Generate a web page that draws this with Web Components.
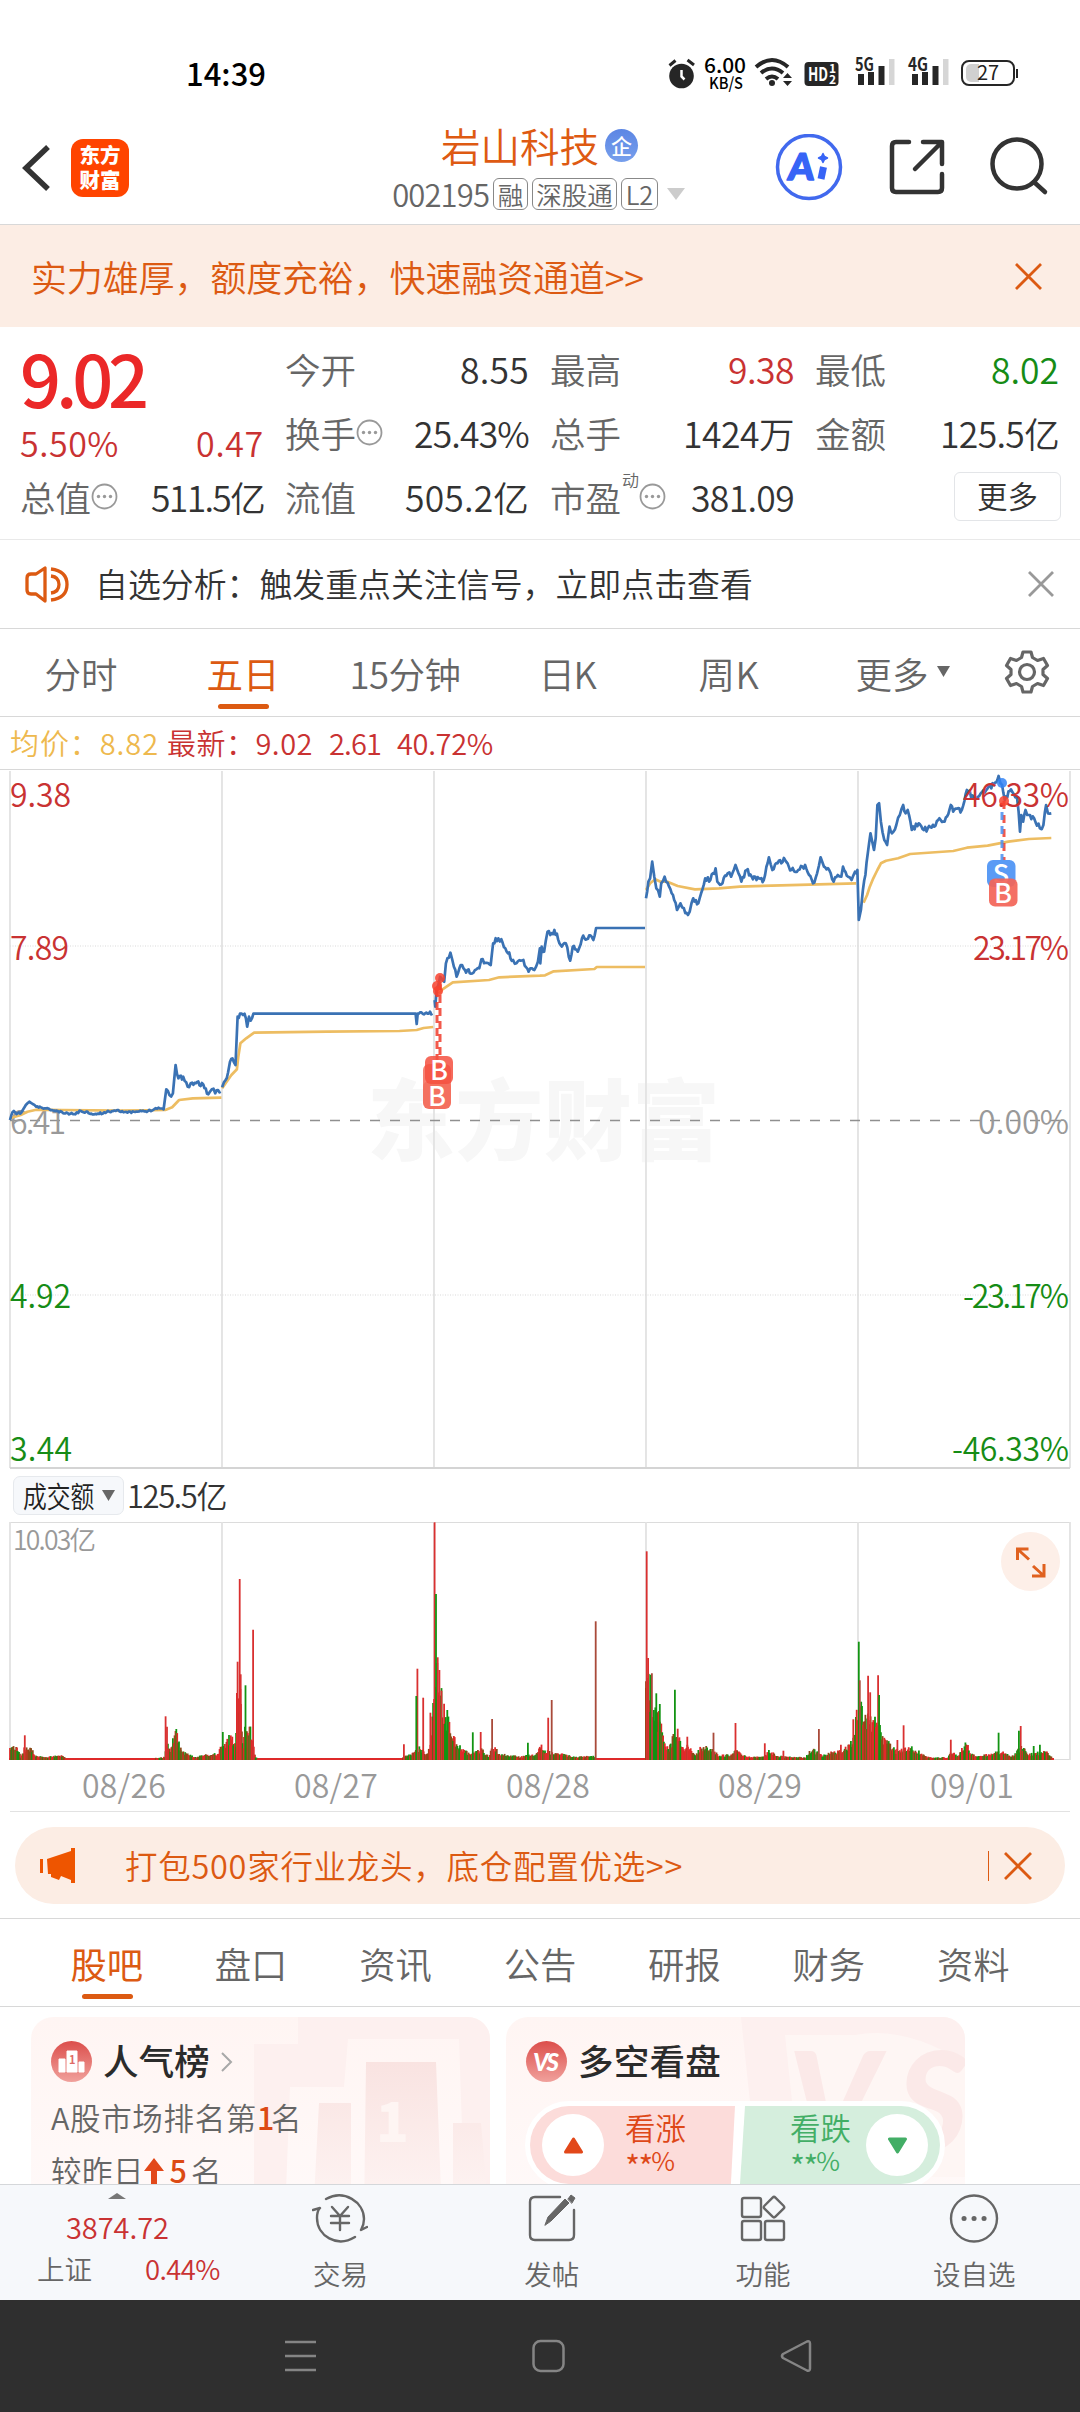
<!DOCTYPE html>
<html lang="zh-CN">
<head>
<meta charset="utf-8">
<title>岩山科技 002195</title>
<style>
    body{
        margin: 0;
        width: 1080px;
        height: 2412px;
        overflow: hidden;
        background: #fff;
        color: #333;
        font-family: "Noto Sans CJK SC", "Noto Sans", sans-serif;
        font-weight: 350;
        display: flex;
        flex-direction: column;
        --orange: #dc5a12;
        --red: #c93232;
        --green: #168c16;
        --grey: #666;
        --line: #d8d8d8;
    }
</style>
</head>
<body>
<status-bar></status-bar>
<stock-header>
    <span slot="name">岩山科技</span>
    <fit-text slot="code" w="97">002195</fit-text>
</stock-header>
<promo-banner><fit-text w="613">实力雄厚，额度充裕，快速融资通道&gt;&gt;</fit-text></promo-banner>
<quote-panel></quote-panel>
<notice-bar>自选分析：触发重点关注信号，立即点击查看</notice-bar>
<period-tabs></period-tabs>
<chart-legend></chart-legend>
<price-chart></price-chart>
<volume-head></volume-head>
<volume-chart></volume-chart>
<promo-pill><fit-text w="558">打包500家行业龙头，底仓配置优选&gt;&gt;</fit-text></promo-pill>
<section-tabs></section-tabs>
<card-row>
    <rank-card></rank-card>
    <vote-card></vote-card>
</card-row>
<bottom-bar></bottom-bar>
<system-nav></system-nav>

<script>
// small helper: every element keeps its markup in a template string
function define(name, html, setup){
    customElements.define(name, class extends HTMLElement{
        constructor(){
            super();
            this.attachShadow({mode: "open"});
            this.shadowRoot.innerHTML = html;
            if(setup){
                setup(this.shadowRoot, this);
            }
        }
    });
}

define("status-bar", `
<style>
    :host{
        display: flex;
        height: 105px;
        align-items: center;
        justify-content: space-between;
        box-sizing: border-box;
        padding: 40px 58px 0 186px;
    }
    .time{
        font-size: 31px;
        line-height: 40px;
        font-weight: 500;
        color: #000;
    }
    .icons{ display: block; }
</style>
<span class="time"><fit-text w="80">14:39</fit-text></span>
<svg class="icons" width="354" height="44" viewBox="668 51 354 44" fill="none" stroke="#262626" font-family="Noto Sans CJK SC">
    <circle cx="681.500" cy="76" r="12.300" fill="#262626" stroke="none"/>
    <path d="M669.500 65.500l6-5M687.500 60l6.500 5" stroke-width="3"/>
    <path d="M681.500 70v6.500l3 3" stroke="#fff" stroke-width="2.500"/>
    <g fill="#000" stroke="none" font-weight="500">
        <text x="704" y="73" font-size="20" textLength="42" lengthAdjust="spacingAndGlyphs">6.00</text>
        <text x="709" y="88.500" font-size="16" textLength="34" lengthAdjust="spacingAndGlyphs">KB/S</text>
    </g>
    <g stroke-width="4">
        <path d="M756 67q16-14 32 0M761 73q11-9 22 0M766 79q6-5 12 0"/>
    </g>
    <circle cx="772" cy="83" r="3" fill="#262626" stroke="none"/>
    <path d="M783 78l4.500-5 4.500 5zM783 81l4.500 5 4.500-5z" fill="#262626" stroke="none"/>
    <rect x="804.500" y="62" width="34" height="24" rx="4" fill="#262626" stroke="none"/>
    <g fill="#fff" stroke="none" font-weight="700">
        <text x="808" y="81" font-size="19" textLength="20" lengthAdjust="spacingAndGlyphs">HD</text>
        <text x="829" y="73" font-size="12">1</text>
        <text x="829" y="84" font-size="12">2</text>
    </g>
    <g fill="#262626" stroke="none">
        <text x="855" y="71" font-size="18" font-weight="700" textLength="19" lengthAdjust="spacingAndGlyphs">5G</text>
        <path d="M858 74h6v11h-6zM868 72h6v13h-6zM878.500 66h6v19h-6z"/>
        <path d="M889 59h5.500v26H889z" fill="#d6d6d6"/>
        <text x="908" y="71" font-size="18" font-weight="700" textLength="20" lengthAdjust="spacingAndGlyphs">4G</text>
        <path d="M912 74h6v11h-6zM922 72h6v13h-6zM932.500 66h6v19h-6z"/>
        <path d="M943 59h5.500v26H943z" fill="#d6d6d6"/>
    </g>
    <rect x="962" y="61" width="52" height="24" rx="7" stroke-width="2"/>
    <path d="M971 64h8v18h-8a5 5 0 0 1-5-5v-8a5 5 0 0 1 5-5z" fill="#d0d0d0" stroke="none"/>
    <path d="M1017 69v9" stroke-width="2"/>
    <text x="977" y="80" font-size="20" fill="#222" stroke="none" font-weight="400">27</text>
</svg>
`);

define("stock-header", `
<style>
    :host{
        display: grid;
        grid-template-columns: 376px 327px 1fr;
        height: 119px;
        border-bottom: 1px solid var(--line);
    }
    .left{ display: flex; align-items: center; padding: 6px 0 0 22px; gap: 20px; }
    .logo{
        width: 58px;
        height: 58px;
        border-radius: 12px;
        background: #ff4400;
        color: #fff;
        font-size: 20.500px;
        line-height: 25px;
        font-weight: 900;
        text-align: center;
        box-sizing: border-box;
        padding-top: 3px;
    }
    .mid{ display: flex; flex-direction: column; align-items: center; padding-top: 15px; }
    .name{
        display: flex;
        align-items: center;
        gap: 6px;
        font-size: 39.500px;
        line-height: 50px;
        color: #de5a12;
    }
    .ent{
        width: 33px;
        height: 33px;
        border-radius: 50%;
        background: linear-gradient(#5c86e4, #779fec);
        color: #fff;
        font-size: 21px;
        line-height: 32px;
        font-weight: 500;
        text-align: center;
    }
    .code{ display: flex; align-items: center; gap: 4px; font-size: 31px; line-height: 42px; color: var(--grey); margin: 3px 0 0 -2px; }
    .tag{
        border: 1px solid #888;
        border-radius: 6px;
        height: 30px;
        line-height: 29px;
        font-size: 25.500px;
        padding: 0 3.500px;
    }
    .code svg{ margin-left: 5px; }
    .icons{ display: block; margin: 29px 0 0 57px; }
</style>
<div class="left">
    <svg width="29" height="46" viewBox="22 144 29 46" fill="none" stroke="#333" stroke-width="5.500"><path d="M48 146L26 167l22 21"/></svg>
    <div class="logo">东方<br>财富</div>
</div>
<div class="mid">
    <div class="name"><slot name="name"></slot><span class="ent">企</span></div>
    <div class="code">
        <slot name="code"></slot>
        <span class="tag">融</span><span class="tag">深股通</span><span class="tag">L2</span>
        <svg width="18" height="12"><path d="M0 0h18l-9 12z" fill="#ccc"/></svg>
    </div>
</div>
<svg class="icons" width="300" height="70" viewBox="760 134 300 70" fill="none" stroke="#333" stroke-width="4.500" stroke-linecap="round" stroke-linejoin="round">
    <circle cx="809" cy="167" r="31.500" stroke="#4169ee" stroke-width="3.500"/>
    <text x="789" y="180" font-family="Lato" font-weight="900" font-size="37" fill="#3764f6" stroke="#3764f6" stroke-width="1.500" transform="skewX(-5) translate(14 0)">A</text>
    <path d="M823.500 167l-2.500 12" stroke="#3764f6" stroke-width="7" stroke-linecap="butt"/>
    <path d="M823 153.500l1.500 3 3 1.500-3 1.500-1.500 3-1.500-3-3-1.500 3-1.500z" fill="#3764f6" stroke="#3764f6" stroke-width="1.500"/>
    <path d="M909 142h-13q-4 0-4 4v42q0 4 4 4h42q4 0 4-4v-14M923 142h19v22M941 143l-26 26"/>
    <circle cx="1017" cy="164" r="24.500"/>
    <path d="M1034 182l11 10"/>
</svg>
`);

define("promo-banner", `
<style>
    :host{
        display: flex;
        height: 102px;
        align-items: center;
        justify-content: space-between;
        box-sizing: border-box;
        padding: 0 38px 0 31px;
        background: #fcede4;
        color: var(--orange);
        font-size: 36px;
    }
</style>
<slot></slot>
<svg width="27" height="27" stroke="#dc5a12" stroke-width="2.800"><path d="M1 1l25 25M26 1L1 26"/></svg>
`);

define("more-dot", `
<style>
    :host{ display: inline-flex; }
</style>
<svg width="27" height="27" viewBox="0 0 27 27" fill="#999">
    <circle cx="13.500" cy="13.500" r="12" fill="none" stroke="#999" stroke-width="1.800"/>
    <circle cx="7.500" cy="13.500" r="1.700"/><circle cx="13.500" cy="13.500" r="1.700"/><circle cx="19.500" cy="13.500" r="1.700"/>
</svg>
`);

define("quote-cell", `
<style>
    :host{
        display: flex;
        align-items: center;
        justify-content: space-between;
        font-size: 35.500px;
        height: 64px;
    }
    .label{ display: flex; align-items: center; color: var(--grey); gap: 0; margin-left: -1px; }
</style>
<span class="label"><slot name="label"></slot></span>
<slot></slot>
`);

define("quote-panel", `
<style>
    :host{
        display: grid;
        grid-template-columns: repeat(4, 243px);
        grid-template-rows: repeat(3, 64px);
        column-gap: 22px;
        padding: 9px 0 10px 21px;
        height: 193px;
        border-bottom: 1px solid #e9e9e9;
    }
    .last{ grid-row: span 2; display: flex; flex-direction: column; color: var(--red); font-size: 34px; margin-left: -1px; }
    .price{ font-size: 72px; line-height: 82px; font-weight: 500; color: #eb2828; }
    .change{ display: flex; justify-content: space-between; line-height: 40px; margin-top: 5px; }
    .up{ color: var(--red); }
    .down{ color: var(--green); }
    sup{ font-size: 17px; line-height: 20px; align-self: flex-start; margin: -1px 0 0 1px; }
    .btn{
        justify-self: end;
        align-self: center;
        width: 105px;
        height: 47px;
        border: 1px solid #e3e5e8;
        border-radius: 6px;
        font-size: 30.500px;
        line-height: 45px;
        text-align: center;
        margin: 0 -2px 0 0;
    }
</style>
<div class="last">
    <div class="price"><fit-text w="124">9.02</fit-text></div>
    <div class="change"><fit-text w="99">5.50%</fit-text><fit-text w="68">0.47</fit-text></div>
</div>
<quote-cell><span slot="label">今开</span><fit-text w="69">8.55</fit-text></quote-cell>
<quote-cell><span slot="label">最高</span><fit-text w="66" class="up">9.38</fit-text></quote-cell>
<quote-cell><span slot="label">最低</span><fit-text w="68" class="down">8.02</fit-text></quote-cell>
<quote-cell><span slot="label">换手</span><more-dot slot="label"></more-dot><fit-text w="115">25.43%</fit-text></quote-cell>
<quote-cell><span slot="label">总手</span><fit-text w="111">1424万</fit-text></quote-cell>
<quote-cell><span slot="label">金额</span><fit-text w="119">125.5亿</fit-text></quote-cell>
<quote-cell><span slot="label">总值</span><more-dot slot="label"></more-dot><fit-text w="113">511.5亿</fit-text></quote-cell>
<quote-cell><span slot="label">流值</span><fit-text w="124">505.2亿</fit-text></quote-cell>
<quote-cell><span slot="label">市盈</span><sup slot="label">动</sup><more-dot slot="label"></more-dot><fit-text w="103">381.09</fit-text></quote-cell>
<div class="btn">更多</div>
`);

define("notice-bar", `
<style>
    :host{
        display: flex;
        align-items: center;
        height: 88px;
        padding: 0 26px 0 25px;
        border-bottom: 1px solid var(--line);
        font-size: 32.900px;
    }
    .icon{ margin-right: 26px; }
    .text{ flex: 1; margin-top: -3px; }
</style>
<svg class="icon" width="44" height="38" viewBox="25 564 44 38" fill="none" stroke="#dc5a12" stroke-width="3.300" stroke-linejoin="round">
    <path d="M45 567v33l-9-7h-5q-4 0-4-4v-12q0-4 4-4h5z"/>
    <path d="M51 575q8 1 8 8.500T51 592M51 568q16 2 16 15.500T51 599"/>
</svg>
<span class="text"><slot></slot></span>
<svg width="26" height="26" stroke="#999" stroke-width="2.800"><path d="M1 1l24 24M25 1L1 25"/></svg>
`);

define("period-tabs", `
<style>
    :host{
        display: flex;
        height: 87px;
        border-bottom: 1px solid var(--line);
        font-size: 36.500px;
        color: var(--grey);
    }
    div{
        width: 162px;
        display: flex;
        align-items: center;
        justify-content: center;
        gap: 8px;
        padding-top: 1px;
        box-sizing: border-box;
    }
    .on{ color: var(--orange); font-weight: 400; position: relative; }
    .on::after{
        content: "";
        position: absolute;
        left: 56px;
        bottom: 7px;
        width: 51px;
        height: 5px;
        border-radius: 3px;
        background: var(--orange);
    }
    .more{ width: 185px; }
    .more svg{ margin-top: -3px; }
    .gear{ margin: 20px 0 0 9px; }
</style>
<div>分时</div>
<div class="on">五日</div>
<div><fit-text w="111">15分钟</fit-text></div>
<div><fit-text w="57">日K</fit-text></div>
<div><fit-text w="61">周K</fit-text></div>
<div class="more">更多<svg width="13" height="11"><path d="M0 0h13l-6.500 11z" fill="#666"/></svg></div>
<svg class="gear" width="46" height="46" viewBox="0 0 46 46" fill="none" stroke="#666" stroke-width="3.200" stroke-linejoin="round">
    <path d="M19 3h8l1.500 5.500 5 3 6-2 4 7-4.500 4v5l4.500 4-4 7-6-2-5 3L27 43h-8l-1.500-5.500-5-3-6 2-4-7 4.500-4v-5l-4.500-4 4-7 6 2 5-3z"/>
    <circle cx="23" cy="23" r="7.500"/>
</svg>
`);

define("chart-legend", `
<style>
    :host{
        display: flex;
        align-items: center;
        height: 53px;
        padding: 0 0 3px 10px;
        box-sizing: border-box;
        font-size: 29px;
        color: var(--red);
        border-bottom: 1px solid var(--line);
    }
    .avg{ color: #eeb94e; margin-right: 8px; }
    .v{ margin-right: 16px; }
</style>
<fit-text w="149" class="avg">均价：8.82</fit-text>
<fit-text w="146" class="v">最新：9.02</fit-text>
<fit-text w="52" class="v">2.61</fit-text>
<fit-text w="96">40.72%</fit-text>
`);

// Both charts plot samples taken on a 3136 unit wide grid
const SX = 1 / 2.904;
const DAYS = [222, 434, 646, 858];

const price = [
    [29,1110,33,1095,40,1083,48,1092,62,1088,75,1065,85,1055,95,1062,105,1070,130,1075,150,1080,190,1090,215,1092,235,1083,280,1093,310,1086,340,1080,370,1088,400,1085,430,1083,460,1073,475,1078,483,1018,492,1035,502,1030,510,945,518,985,532,980,545,1010,558,998,590,1003,605,1033,615,1018,625,1030,641,1025],
    [645,1012,655,990,662,968,668,935,675,925,684,945,690,800,697,791,710,791,718,830,723,800,728,812,736,791,1207,791,1210,822,1213,791,1256,791],
    [1262,750,1264,770,1268,720,1278,680,1290,695,1295,640,1308,608,1318,650,1326,680,1338,645,1350,660,1375,668,1392,655,1398,628,1425,645,1432,580,1447,565,1460,580,1475,610,1490,630,1500,640,1520,630,1535,665,1545,655,1552,660,1562,635,1568,595,1569,640,1573,590,1580,605,1590,545,1598,555,1610,540,1628,585,1643,580,1656,632,1663,590,1678,605,1690,565,1718,560,1723,570,1731,534,1873,534],
    [1876,445,1883,395,1888,385,1894,335,1900,380,1906,415,1916,440,1920,400,1930,380,1943,410,1958,450,1966,480,1976,460,1986,475,1998,495,2008,460,2013,445,2028,460,2036,430,2048,385,2063,390,2078,355,2083,395,2098,400,2113,370,2123,380,2136,345,2153,395,2168,360,2183,380,2218,390,2233,322,2243,360,2258,340,2280,330,2298,360,2318,360,2338,345,2361,400,2373,370,2383,322,2393,350,2408,360,2421,395,2433,375,2443,380,2448,350,2463,380,2473,390,2483,365,2490,360,2494,510,2500,480,2506,420,2513,375,2520,310,2528,250,2538,300,2543,265,2548,165,2553,160,2558,215,2568,270,2576,285,2583,230,2590,250,2603,225,2613,195,2623,165,2630,190,2636,180,2648,240,2668,220,2683,240,2713,230,2728,205,2743,215,2761,165,2768,185,2793,180,2808,120,2828,145,2848,130,2868,115,2886,105,2900,78,2910,105,2918,150,2936,118,2953,140,2958,185,2962,245,2966,195,2971,215,2978,180,2983,195,3003,205,3020,235,3030,225,3038,165,3043,190,3053,190]
];
const average = [
    [29,1105,60,1095,80,1085,105,1079,180,1080,350,1082,480,1080,500,1072,520,1050,560,1045,643,1043],
    [645,1015,655,1000,672,975,688,958,692,920,698,880,715,865,738,848,950,845,1160,843,1210,840,1230,834,1258,831],
    [1275,730,1285,718,1315,697,1420,690,1450,682,1568,677,1583,676,1608,664,1726,657,1733,651,1873,651],
    [1876,420,1888,400,1903,388,1918,395,1938,395,1968,408,2018,418,2088,415,2148,410,2268,406,2486,400],
    [2508,458,2518,435,2526,410,2536,385,2548,360,2558,340,2573,332,2608,325,2643,312,2768,303,2808,293,2868,287,2928,275,2988,267,3053,264]
];

let seed = 11;
function rand(){
    seed = (seed * 16807) % 2147483647;
    return seed / 2147483647;
}

// joins the samples; jitter adds the minute to minute movement between them
function linePath(data, jitter){
    let d = "";
    for(let i = 0; i < data.length; i += 2){
        const x = data[i], y = data[i + 1];
        if(i && jitter){
            const px = data[i - 2], py = data[i - 1];
            const steps = Math.floor((x - px) / 3.5);
            for(let s = 1; s < steps; s++){
                const flat = py === y && x - px > 100;
                const off = flat ? 0 : (rand() - 0.5) * (y > 1040 ? 6 : jitter);
                d += "L" + ((px + (x - px) * s / steps) * SX).toFixed(1) + " " + (750 + (py + (y - py) * s / steps + off) / 3).toFixed(1);
            }
        }
        d += (i ? "L" : "M") + (x * SX).toFixed(1) + " " + (750 + y / 3).toFixed(1);
    }
    return d;
}

define("price-chart", `
<style>
    :host{ display: block; height: 699px; }
    svg{ display: block; }
</style>
<svg width="1080" height="699" viewBox="0 770 1080 699" fill="none" font-size="32">
    <text x="367" y="1153" font-size="88" style="font-weight:900" fill="#f7f7f7" textLength="353">东方财富</text>
    <g class="grid" stroke="#e2e2e2" stroke-width="1.800"></g>
    <path d="M10 946h1060M10 1295h1060" stroke="#d9d9d9" stroke-dasharray="1 1.500"/>
    <path d="M10 1468h1060" stroke="#d4d4d4" stroke-width="2"/>
    <path d="M10 1120.500h1060" stroke="#8f8f8f" stroke-width="1.700" stroke-dasharray="10 10"/>
    <g fill="#999">
        <text x="10" y="1134" textLength="56">6.41</text>
        <text x="978" y="1134" textLength="91">0.00%</text>
    </g>
    <g fill="#168c16">
        <text x="10" y="1308" textLength="61">4.92</text>
        <text x="10" y="1460.500" textLength="62">3.44</text>
        <text x="963" y="1308" textLength="106">-23.17%</text>
        <text x="952" y="1460.500" textLength="117">-46.33%</text>
    </g>
    <g class="avg" stroke="#edbd62" stroke-width="2.700" stroke-linejoin="round"></g>
    <g class="price" stroke="#3a72b4" stroke-width="2.700" stroke-linejoin="round"></g>
    <g fill="#c93232">
        <text x="10" y="807" textLength="61">9.38</text>
        <text x="10" y="959.500" textLength="59">7.89</text>
        <text x="963" y="807" textLength="106">46.33%</text>
        <text x="973" y="959.500" textLength="96">23.17%</text>
    </g>
    <g stroke="#f03c2c" stroke-opacity=".85" stroke-width="3" stroke-dasharray="8 5">
        <path d="M437 989v78M440 982v78"/>
        <path d="M1004 801v78" stroke-dasharray="8 6"/>
        <path d="M1002 812v52" stroke="#4a8ff0" stroke-dasharray="8 6"/>
    </g>
    <g fill="#f8422e" fill-opacity=".85">
        <circle cx="440" cy="978" r="5"/><circle cx="437" cy="986" r="5"/><circle cx="438" cy="991" r="5"/>
        <circle cx="1004" cy="801" r="5"/>
        <circle cx="1002" cy="783" r="5" fill="#3484f4"/>
    </g>
    <g font-size="27" text-anchor="middle">
        <rect x="423" y="1064" width="28" height="29" rx="6" fill="#f4604f" fill-opacity=".8"/>
        <rect x="423" y="1081" width="28" height="28" rx="6" fill="#f4705f"/>
        <text x="437" y="1106" fill="#fff" style="font-weight:500">B</text>
        <rect x="425" y="1056" width="28" height="28" rx="6" fill="#f4503f" fill-opacity=".85"/>
        <text x="439" y="1080" fill="#fff" style="font-weight:500">B</text>
        <rect x="987" y="860" width="28.500" height="27" rx="6" fill="#5a9bf5"/>
        <text x="1001" y="884" fill="#fff" style="font-weight:500">S</text>
        <rect x="989" y="878.500" width="28.500" height="28" rx="6" fill="#f36558" fill-opacity=".93"/>
        <text x="1003" y="902.500" fill="#fff" style="font-weight:500">B</text>
    </g>
</svg>
`, root => {
    root.querySelector(".grid").innerHTML = [10, ...DAYS, 1070].map(x => `<path d="M${x} 771v697"/>`).join("");
    root.querySelector(".avg").innerHTML = average.map(a => `<path d="${linePath(a, 0)}"/>`).join("");
    root.querySelector(".price").innerHTML = price.map(p => `<path d="${linePath(p, 16)}"/>`).join("");
});

define("volume-head", `
<style>
    :host{ display: flex; align-items: center; height: 53px; padding-left: 13px; gap: 3px; font-size: 31px; }
    .chip{
        display: flex;
        align-items: center;
        width: 109px;
        height: 37px;
        background: #f6f8fb;
        border: 1px solid #e6e9ed;
        border-radius: 7px;
        color: #222;
    }
    .chip span{
        display: block;
        width: 72px;
        margin: 0 7px 0 9px;
        font-size: 29px;
        line-height: 35px;
        white-space: nowrap;
    }
    .chip b{ display: block; font-weight: inherit; width: 87px; transform: scaleX(.82); transform-origin: 0 50%; }
    fit-text{ margin-top: -3px; }
</style>
<div class="chip"><span><b>成交额</b></span><svg width="13" height="11"><path d="M0 0h13l-6.500 11z" fill="#666"/></svg></div>
<fit-text w="99">125.5亿</fit-text>
`);

// outline of the bar heights, then the single bars that stand out of it
const outline = [29,45,50,40,60,12,72,40,90,35,105,12,130,10,180,14,195,4,450,6,478,10,485,60,495,25,502,70,512,88,525,35,540,20,570,8,590,16,630,20,645,45,660,60,672,80,683,45,688,200,700,200,706,40,712,130,722,110,732,80,740,15,750,4,1165,5,1180,15,1205,25,1215,40,1240,20,1250,60,1258,180,1270,300,1282,210,1292,140,1305,120,1318,75,1340,35,1370,20,1400,35,1420,10,1430,45,1450,22,1510,10,1560,20,1570,50,1583,30,1613,20,1638,18,1668,10,1723,12,1736,4,1873,4,1876,280,1886,250,1898,150,1918,130,1928,50,1943,40,1953,70,1968,80,1983,35,1998,50,2018,15,2038,45,2058,35,2073,30,2088,14,2128,18,2138,35,2168,10,2218,10,2233,30,2258,12,2338,8,2358,35,2388,15,2418,25,2448,30,2473,60,2483,80,2488,160,2498,180,2508,130,2523,160,2536,120,2553,130,2563,80,2583,50,2603,30,2648,38,2678,20,2698,8,2753,8,2763,25,2783,12,2806,60,2818,20,2838,10,2913,30,2938,10,2958,35,2968,40,2988,18,3038,28,3056,6];
const spikes = {
    "#d93030": [72,74,481,131,485,100,690,295,696,543,699,257,735,391,1173,47,1212,274,1229,187,1250,142,1262,713,1271,308,1276,270,1282,208,1396,84,1592,127,1878,626,1882,306,1968,94,1996,70,2136,111,2221,50,2275,28,2442,46,2478,122,2521,253,2527,203,2550,254,2606,60,2624,104,2761,61,2964,102],
    "#129412": [647,84,713,224,1209,192,1266,498,1299,150,1373,83,1533,52,1889,256,1899,150,1906,200,1916,168,1960,211,2494,355,2501,175,2553,195,2900,82,2959,88,3002,42,3020,46],
    "#a94a3a": [1429,123,1602,180,1730,416,1893,260,2072,82,2378,93,2497,239]
};

define("volume-chart", `
<style>
    :host{ display: block; position: relative; }
    svg{ display: block; }
    .plot{ overflow: visible; }
    .dates{
        display: flex;
        margin: 0 10px;
        padding-left: 8px;
        height: 51px;
        line-height: 49px;
        font-size: 32px;
        color: #999;
        border-bottom: 1.500px solid #e2e2e2;
    }
    .dates span{ width: 212px; text-align: center; flex: none; }
    .expand{ position: absolute; left: 1001px; top: 10px; }
</style>
<svg class="plot" width="1080" height="238" viewBox="0 1522 1080 238" fill="none">
    <path d="M10 1522.500h1060M10 1759.500h1060" stroke="#dcdcdc"/>
    <g class="grid" stroke="#e2e2e2" stroke-width="1.800"></g>
    <g class="bars" stroke-width="1.800"></g>
    <text x="13" y="1550" font-size="26.500" fill="#999" textLength="83">10.03亿</text>
</svg>
<div class="dates"></div>
<svg class="expand" width="59" height="59" viewBox="0 0 59 59" fill="none" stroke="#e0611f" stroke-width="3">
    <circle cx="29.500" cy="29.500" r="29.500" fill="#fdefe8" stroke="none"/>
    <path d="M16.500 28V17h11M17 17.500l11 10M32 34l10.500 9.500M43 32v12H31"/>
</svg>
`, root => {
    const mixed = "#8a4a18";
    let bars = `<path d="M9 1759h1045" stroke="#d93030" stroke-width="2"/>`;
    const bar = (x, h, c) => `<path d="M${(x * SX).toFixed(1)} 1760v${(-h / 3).toFixed(1)}" stroke="${c}"/>`;
    for(let i = 2; i < outline.length; i += 2){
        const x0 = outline[i - 2], h0 = outline[i - 1];
        const x1 = outline[i], h1 = outline[i + 1];
        for(let x = x0; x < x1; x += 2.560){
            const h = (h0 + (h1 - h0) * (x - x0) / (x1 - x0)) * (0.6 + rand() * 0.5);
            const r = rand();
            bars += bar(x, Math.max(h, 4), h < 6 || r < 0.4 ? "#e02a2a" : r < 0.68 ? "#129412" : mixed);
        }
    }
    for(const c in spikes){
        for(let i = 0; i < spikes[c].length; i += 2){
            bars += bar(spikes[c][i], spikes[c][i + 1], c);
        }
    }
    root.querySelector(".bars").innerHTML = bars;
    root.querySelector(".grid").innerHTML = [10, ...DAYS, 1070].map(x => `<path d="M${x} 1522v238"/>`).join("");
    root.querySelector(".dates").innerHTML = ["08/26", "08/27", "08/28", "08/29", "09/01"]
        .map(d => `<span><fit-text w="84">${d}</fit-text></span>`).join("");
});

define("promo-pill", `
<style>
    :host{
        display: flex;
        align-items: center;
        height: 77px;
        box-sizing: border-box;
        margin: 15px 15px 14px;
        padding: 0 33px 0 25px;
        border-radius: 39px;
        background: #fcede4;
        color: var(--orange);
        font-size: 32.500px;
    }
    .horn{ margin-right: 45px; }
    .text{ flex: 1; margin-top: -3px; }
    .close{ border-left: 1px solid #dc5a12; padding-left: 15px; height: 30px; display: flex; align-items: center; }
</style>
<svg class="horn" width="40" height="36" viewBox="0 0 40 36" fill="#ee5500">
    <path d="M0 11h3v14H0zM7 11l24-8V0h4v35h-4v-3l-10-4-2 4-8-3v-3H8z"/>
</svg>
<span class="text"><slot></slot></span>
<div class="close"><svg width="28" height="28" stroke="#dc5a12" stroke-width="2.800"><path d="M1 1l26 26M27 1L1 27"/></svg></div>
`);

define("section-tabs", `
<style>
    :host{
        display: flex;
        height: 87px;
        border-top: 1px solid var(--line);
        border-bottom: 1px solid var(--line);
        padding: 0 34.500px;
        font-size: 36.300px;
        color: var(--grey);
    }
    span{ width: 144.500px; text-align: center; line-height: 89px; }
    .on{ color: var(--orange); position: relative; font-weight: 400; }
    .on::after{
        content: "";
        position: absolute;
        left: 47px;
        bottom: 7px;
        width: 51px;
        height: 5px;
        border-radius: 3px;
        background: var(--orange);
    }
</style>
<span class="on">股吧</span><span>盘口</span><span>资讯</span><span>公告</span><span>研报</span><span>财务</span><span>资料</span>
`);

define("card-row", `
<style>
    :host{ display: flex; gap: 16px; height: 177px; overflow: hidden; padding-left: 31px; box-sizing: border-box; padding-top: 10px; }
</style>
<slot></slot>
`);

const cardStyle = `
    :host{
        display: block;
        width: 459px;
        height: 230px;
        border-radius: 22px 22px 0 0;
        background: linear-gradient(#fff5f3, #fffafa);
        position: relative;
        overflow: hidden;
        flex: none;
        color: var(--grey);
    }
    .bg{ position: absolute; right: 0; top: 0; }
    .body{ position: relative; padding: 21px 0 0 20px; }
    .title{ display: flex; align-items: center; font-size: 35.500px; line-height: 50px; font-weight: 500; color: #2b2b2b; gap: 11px; }
    .title fit-text{ margin-top: -3px; }
`;

define("rank-card", `
<style>${cardStyle}
    .row{ font-size: 30.500px; line-height: 46px; margin-top: 9px; display: flex; align-items: center; }
    .row + .row{ margin-top: 7px; }
    b{ color: #dc4a14; font-weight: 500; }
</style>
<svg class="bg" width="260" height="200" viewBox="0 0 260 200">
    <defs><linearGradient id="f" x1="0" y1="0" x2="0" y2="1"><stop offset="0" stop-color="#f9e3e1"/><stop offset="1" stop-color="#fef5f4"/></linearGradient></defs>
    <path d="M24 200V27h44V0h192v200H235l-6-178H118l-4 48H60l-5 130z" fill="#fdf0ef"/>
    <path d="M136 45h70l6 155h-78zM89 86h32v114h-38zM223 106h28l8 94h-36z" fill="url(#f)"/>
    <text x="146" y="125" font-size="54" font-weight="900" fill="#fef5f3">1</text>
</svg>
<div class="body">
    <div class="title">
        <svg width="41" height="41" viewBox="0 0 41 41">
            <defs><linearGradient id="r" x1="0" y1="0" x2="0" y2="1"><stop offset="0" stop-color="#dc4e4b"/><stop offset="1" stop-color="#f0a19c"/></linearGradient></defs>
            <circle cx="20.500" cy="20.500" r="20.500" fill="url(#r)"/>
            <path d="M8 18h6v13H8zM16 10h10v21H16zM28 21h5v10h-5z" fill="#fff" stroke="#fff"/>
            <text x="18" y="23" font-size="11" font-weight="700" fill="#df6a67">1</text>
        </svg>
        <fit-text w="107">人气榜</fit-text>
        <svg width="12" height="20" fill="none" stroke="#a8a8a8" stroke-width="2"><path d="M1 1l9 9-9 9"/></svg>
    </div>
    <div class="row"><fit-text w="206">A股市场排名第</fit-text><b><fit-text w="14">1</fit-text></b>名</div>
    <div class="row"><fit-text w="93">较昨日</fit-text><svg width="20" height="30" viewBox="0 0 20 30"><path d="M10 3l10 13h-7v13H7V16H0z" fill="#e2481a"/></svg><b><fit-text w="27">&nbsp;5&nbsp;</fit-text></b>名</div>
</div>
`);

define("vote-card", `
<style>${cardStyle}
    .vs{
        width: 41px;
        height: 41px;
        border-radius: 50%;
        background: linear-gradient(#dc4e4b, #f0a19c);
        color: #fff;
        font: italic 900 24px/41px Lato, sans-serif;
        text-align: center;
        letter-spacing: -2px;
        text-indent: -3px;
    }
    .pill{ display: flex; width: 410px; height: 78px; border: 5px solid #fff; border-radius: 44px; margin: 16px 0 0 0; overflow: hidden; background: #fff; }
    .side{ display: flex; align-items: center; font-size: 30.500px; }
    .up{ width: 205px; background: #fcdcda; color: #de4818; clip-path: polygon(0 0, 100% 0, 98% 100%, 0 100%); gap: 19px; }
    .down{ width: 200px; margin-left: 5px; background: #d5eedd; color: #43ae66; justify-content: flex-end; gap: 15px; clip-path: polygon(2.500% 0, 100% 0, 100% 100%, 0 100%); }
    .dot{ width: 62px; height: 62px; border-radius: 50%; background: #fff; margin: 0 12px; display: flex; align-items: center; justify-content: center; flex: none; }
    .up .dot{ margin-right: 2px; }
    .down .dot{ margin-left: 0; }
    .side p{ margin: -5px 0 0; line-height: 33px; }
    small{ display: block; font-size: 26px; line-height: 31px; }
    i{ font-style: normal; font-size: 33px; line-height: 0; vertical-align: -9px; }
    .pill{ margin-left: -1px; }
</style>
<svg class="bg" width="240" height="160" viewBox="725 0 240 160" font-family="Lato" font-weight="900" font-style="italic">
    <path d="M741 0h224v160H758z" fill="#fdf0ef"/>
    <path d="M785 18h70q50-10 110 28v114H800z" fill="#fef6f4"/>
    <text x="788" y="134" font-size="138" fill="#fbe9e8" textLength="180">VS</text>
</svg>
<div class="body">
    <div class="title"><span class="vs">VS</span><fit-text w="143">多空看盘</fit-text></div>
    <div class="pill">
        <div class="side up">
            <span class="dot"><svg width="21" height="17"><path d="M10.500 2l8 13h-16z" fill="#e2481a" stroke="#e2481a" stroke-width="3" stroke-linejoin="round"/></svg></span>
            <p>看涨<small><fit-text w="48"><i>**</i>%</fit-text></small></p>
        </div>
        <div class="side down">
            <p>看跌<small><fit-text w="48"><i>**</i>%</fit-text></small></p>
            <span class="dot"><svg width="21" height="17"><path d="M2.500 2h16l-8 13z" fill="#43ae66" stroke="#43ae66" stroke-width="3" stroke-linejoin="round"/></svg></span>
        </div>
    </div>
</div>
`);

define("bottom-bar", `
<style>
    :host{
        display: flex;
        height: 116px;
        box-sizing: border-box;
        border-top: 1px solid #d5d7da;
        background: #f6f8fb;
        color: var(--grey);
        font-size: 27.500px;
    }
    .index{ width: 235px; display: flex; flex-direction: column; align-items: center; padding-top: 8px; box-sizing: border-box; }
    .index .num{ color: var(--red); font-size: 29px; line-height: 40px; margin-top: 7px; }
    .index .row{ display: flex; justify-content: space-between; width: 183px; line-height: 40px; margin: 2px 0 0 22px; }
    .index .row fit-text{ color: var(--red); }
    .index svg{ display: block; }
    .item{ width: 211.500px; display: flex; flex-direction: column; align-items: center; padding-top: 7px; box-sizing: border-box; }
    .item span{ line-height: 40px; margin-top: 7px; }
    .item svg{ display: block; fill: none; stroke: #666; stroke-width: 2.400; stroke-linecap: round; stroke-linejoin: round; }
</style>
<div class="index">
    <svg width="18" height="6"><path d="M0 6l9-6 9 6z" fill="#777"/></svg>
    <span class="num"><fit-text w="103">3874.72</fit-text></span>
    <div class="row">上证<fit-text w="75">0.44%</fit-text></div>
</div>
<div class="item">
    <svg width="56" height="54" viewBox="312 2192 56 54">
        <path d="M326 2199c18-10 38 3 38 20q0 6-3 11l6-3M355 2237c-18 11-38-1-38-19q0-7 3-10l-7 2"/>
        <path d="M332 2207l8 9 8-9M340 2216v14M331 2216h18M331 2223h18"/>
    </svg>
    <span>交易</span>
</div>
<div class="item">
    <svg width="50" height="54" viewBox="527 2192 50 54">
        <path d="M560 2197h-25q-5 0-5 5v33q0 5 5 5h34q5 0 5-5v-25"/>
        <path d="M545 2225l3-8 17-18 4 4-18 18zM568 2199l3-4 4 3-3 5z" fill="#666" stroke-width="1"/>
    </svg>
    <span>发帖</span>
</div>
<div class="item">
    <svg width="50" height="54" viewBox="738 2192 50 54">
        <rect x="742" y="2198" width="19" height="19" rx="2"/>
        <rect x="742" y="2221" width="19" height="19" rx="2"/>
        <rect x="765" y="2221" width="19" height="19" rx="2"/>
        <rect x="766" y="2199.500" width="15.500" height="15.500" rx="2" transform="rotate(45 774 2207.500)"/>
    </svg>
    <span>功能</span>
</div>
<div class="item">
    <svg width="50" height="54" viewBox="948 2192 50 54">
        <circle cx="973" cy="2218.500" r="23"/>
        <path d="M963 2218.500h.1M973 2218.500h.1M983 2218.500h.1" stroke-width="5"/>
    </svg>
    <span>设自选</span>
</div>
`);

define("system-nav", `
<style>
    :host{
        display: flex;
        align-items: center;
        justify-content: space-between;
        height: 112px;
        box-sizing: border-box;
        padding: 0 268px 0 284px;
        background: #2f2f2f;
    }
    svg{ fill: none; stroke: #858585; stroke-width: 2.500; stroke-linejoin: round; }
</style>
<svg width="33" height="34"><path d="M1 3h31M1 17h31M1 31h31"/></svg>
<svg width="33" height="34"><rect x="1.500" y="2" width="30" height="30" rx="7"/></svg>
<svg width="32" height="34"><path d="M27 2.500q3-1 3 2v25q0 3-3 2L3 19q-2-2 0-4z"/></svg>
`);

// sets the tracking of its text so that the run is w pixels wide
customElements.define("fit-text", class extends HTMLElement{
    constructor(){
        super();
        this.attachShadow({mode: "open"});
        this.shadowRoot.innerHTML = `
        <style>
            :host{ display: inline-block; white-space: nowrap; }
            span{ display: inline-block; }
        </style>
        <span><slot></slot></span>
        `;
    }
    connectedCallback(){
        const span = this.shadowRoot.querySelector("span");
        const want = Number(this.getAttribute("w"));
        const have = span.getBoundingClientRect().width;
        if(want && have){
            const gap = (want - have) / this.textContent.length;
            span.style.letterSpacing = gap.toFixed(3) + "px";
        }
    }
});
</script>
</body>
</html>
